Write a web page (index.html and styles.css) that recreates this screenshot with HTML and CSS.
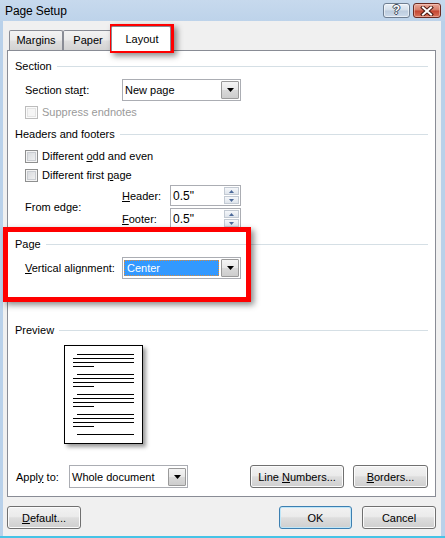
FILE: index.html
```html
<!DOCTYPE html>
<html>
<head>
<meta charset="utf-8">
<title>Page Setup</title>
<link rel="stylesheet" href="styles.css">
</head>
<body>
<div class="window">
  <div class="titlebar">
    <span class="title">Page Setup</span>
    <div class="caption-btns">
      <span class="cbtn help">?</span>
      <span class="cbtn close"><svg width="14" height="10" viewBox="0 0 14 10"><path d="M3 1.5 L11 8.5 M11 1.5 L3 8.5" stroke="#4a1a12" stroke-width="4" stroke-linecap="square" fill="none"/><path d="M3 1.5 L11 8.5 M11 1.5 L3 8.5" stroke="#ffffff" stroke-width="2" stroke-linecap="square" fill="none"/></svg></span>
    </div>
  </div>
  <div class="client">
    <div class="tabs">
      <div class="tab t-margins">Margins</div>
      <div class="tab t-paper">Paper</div>
      <div class="tab active">Layout</div>
    </div>
    <div class="panel">
      <div class="ghead">Section</div>
      <div class="frow r-section">
        <span class="lbl">Section sta<u>r</u>t:</span>
        <div class="combo"><span class="val">New page</span><span class="drop"><svg width="7" height="4" viewBox="0 0 7 4"><polygon points="0,0 7,0 3.5,4" fill="#000"/></svg></span></div>
      </div>
      <div class="chk disabled r-suppress"><span class="box"></span><span>Suppress endnotes</span></div>
      <div class="ghead g-hf">Headers and footers</div>
      <div class="chk r-odd"><span class="box"></span><span>Different <u>o</u>dd and even</span></div>
      <div class="chk r-first"><span class="box"></span><span>Different first <u>p</u>age</span></div>
      <div class="edge">
        <span class="edge-lbl">From edge:</span>
        <span class="elbl"><u>H</u>eader:</span>
        <div class="spin"><span class="sval">0.5"</span><span class="sbtns"><span class="sb"><svg width="5" height="3" viewBox="0 0 5 3"><polygon points="0,3 5,3 2.5,0" fill="#4d6a9a"/></svg></span><span class="sb"><svg width="5" height="3" viewBox="0 0 5 3"><polygon points="0,0 5,0 2.5,3" fill="#4d6a9a"/></svg></span></span></div>
        <span class="elbl"><u>F</u>ooter:</span>
        <div class="spin"><span class="sval">0.5"</span><span class="sbtns"><span class="sb"><svg width="5" height="3" viewBox="0 0 5 3"><polygon points="0,3 5,3 2.5,0" fill="#4d6a9a"/></svg></span><span class="sb"><svg width="5" height="3" viewBox="0 0 5 3"><polygon points="0,0 5,0 2.5,3" fill="#4d6a9a"/></svg></span></span></div>
      </div>
      <div class="ghead g-page">Page</div>
      <div class="frow r-valign">
        <span class="lbl"><u>V</u>ertical alignment:</span>
        <div class="combo focus"><span class="val">Center</span><span class="drop"><svg width="7" height="4" viewBox="0 0 7 4"><polygon points="0,0 7,0 3.5,4" fill="#000"/></svg></span></div>
      </div>
      <div class="ghead g-preview">Preview</div>
      <div class="page">
        <div class="pgroup"><div class="pline ind"></div><div class="pline"></div><div class="pline"></div><div class="pline short"></div></div>
        <div class="pgroup"><div class="pline ind"></div><div class="pline"></div><div class="pline"></div><div class="pline short"></div></div>
        <div class="pgroup"><div class="pline ind"></div><div class="pline"></div><div class="pline"></div><div class="pline short"></div></div>
        <div class="pgroup"><div class="pline ind"></div><div class="pline"></div><div class="pline"></div><div class="pline short"></div></div>
        <div class="pgroup"><div class="pline ind"></div></div>
      </div>
      <div class="apply">
        <span class="alb">Appl<u>y</u> to:</span>
        <div class="combo c-apply"><span class="val">Whole document</span><span class="drop"><svg width="7" height="4" viewBox="0 0 7 4"><polygon points="0,0 7,0 3.5,4" fill="#000"/></svg></span></div>
        <span class="btn b-line"><span>Line <u>N</u>umbers...</span></span>
        <span class="btn b-borders"><span><u>B</u>orders...</span></span>
      </div>
    </div>
    <div class="footer">
      <span class="btn b-default"><span><u>D</u>efault...</span></span>
      <span class="btn b-ok default"><span>OK</span></span>
      <span class="btn b-cancel"><span>Cancel</span></span>
    </div>
  </div>
  <div class="mark mark-tab"></div>
  <div class="mark mark-page"></div>
</div>
</body>
</html>
```
FILE: styles.css
```css
* { box-sizing: border-box; }
html, body { margin: 0; padding: 0; }
body {
  width: 445px;
  height: 538px;
  overflow: hidden;
  font-family: "Liberation Sans", Arial, sans-serif;
  font-size: 11px;
  color: #000;
  background: #fff;
}
u { text-decoration: underline; text-underline-offset: 1px; }

.window {
  position: relative;
  width: 445px;
  height: 538px;
  background: #b9d1ea;
  display: flex;
  flex-direction: column;
  box-shadow: inset 0 -2px 0 #46c3e6;
}

.titlebar {
  height: 21px;
  flex: none;
  display: flex;
  align-items: flex-start;
  background: linear-gradient(#c7d9ed, #bdd3ea);
}
.title {
  font-size: 12px;
  line-height: 21px;
  padding-left: 5px;
  padding-top: 1px;
  letter-spacing: -0.1px;
}
.caption-btns {
  margin-left: auto;
  display: flex;
  gap: 3px;
  padding-top: 3px;
  padding-right: 4px;
}
.cbtn {
  height: 15px;
  border-radius: 3px;
  display: flex;
  align-items: center;
  justify-content: center;
}
.help {
  width: 27px;
  border: 1px solid #6f7e91;
  background: linear-gradient(#e9f0f8, #d3deea 48%, #bccbdd 52%, #cddbeb);
  box-shadow: inset 0 0 0 1px rgba(255,255,255,0.55);
  color: #fff;
  font-weight: bold;
  font-size: 12px;
  line-height: 13px;
  text-shadow: 1px 0 0 #3a4656, -1px 0 0 #3a4656, 0 1px 0 #3a4656, 0 -1px 0 #3a4656;
}
.close {
  width: 28px;
  border: 1px solid #6a2a21;
  background: linear-gradient(#eaa999, #d57a67 48%, #c4432f 52%, #d9735a);
  box-shadow: inset 0 0 0 1px rgba(255,220,210,0.45);
}

.client {
  flex: 1;
  margin: 0 4px 2px 3px;
  background: #f0f0f0;
  padding: 5px 5px 0 4px;
  display: flex;
  flex-direction: column;
}

.tabs {
  display: flex;
  align-items: flex-end;
  height: 25px;
  margin-bottom: -1px;
  padding-left: 2px;
}
.tab {
  height: 20px;
  margin-bottom: 1px;
  border: 1px solid #898c95;
  border-bottom: none;
  border-radius: 2px 2px 0 0;
  background: linear-gradient(#f3f3f3, #ebebeb 45%, #dedede 55%, #d2d2d2);
  line-height: 19px;
  text-align: center;
}
.t-margins { width: 54px; }
.t-paper { width: 50px; }
.tab.active {
  position: relative;
  z-index: 1;
  height: 25px;
  margin-bottom: 0;
  margin-left: -2px;
  width: 60px;
  background: #fff;
  line-height: 24px;
  padding-left: 2px;
}

.panel {
  height: 447px;
  border: 1px solid #898c95;
  background: #fff;
  padding: 8px 7px 8px 7px;
  display: flex;
  flex-direction: column;
}

.ghead {
  display: flex;
  align-items: center;
  height: 14px;
  line-height: 14px;
}
.ghead::after {
  content: "";
  flex: 1;
  height: 1px;
  background: #d5dfe5;
  margin-left: 5px;
}
.g-hf { margin-top: 8px; }
.g-page { margin-top: 8px; }
.g-preview { margin-top: 44px; }

.frow {
  display: flex;
  align-items: center;
  height: 22px;
  padding-left: 10px;
}
.r-section { margin-top: 6px; }
.r-valign { margin-top: 6px; }
.lbl { width: 97px; }

.combo {
  width: 119px;
  height: 22px;
  border: 1px solid #abadb3;
  background: #fff;
  display: flex;
  align-items: center;
  padding-left: 2px;
}
.combo .val { flex: 1; white-space: nowrap; }
.drop {
  width: 18px;
  height: 18px;
  margin: 0 1px 0 2px;
  border: 1px solid #9a9a9a;
  border-radius: 1px;
  background: linear-gradient(#f4f4f4, #e8e8e8 48%, #d9d9d9 52%, #cdcdcd);
  display: flex;
  align-items: center;
  justify-content: center;
}
.combo.focus { padding-left: 1px; }
.combo.focus .val {
  height: 16px;
  line-height: 14px;
  background: #3399ff;
  color: #fff;
  border: 1px dotted #d98a3d;
  padding-left: 2px;
}

.chk {
  display: flex;
  align-items: center;
  gap: 4px;
  height: 14px;
  padding-left: 10px;
}
.box {
  width: 13px;
  height: 13px;
  border: 1px solid #8e8f8f;
  background: linear-gradient(135deg, #d3d6da, #f5f5f5);
  box-shadow: inset 0 0 0 1px #f4f4f4, inset 0 0 0 2px #c9ccd1;
}
.chk.disabled { color: #9a9a9a; }
.chk.disabled .box {
  border-color: #bcbcbc;
  background: #f5f5f5;
  box-shadow: inset 0 0 0 1px #fbfbfb, inset 0 0 0 2px #e4e4e4;
}
.r-suppress { margin-top: 4px; }
.r-odd { margin-top: 8px; }
.r-first { margin-top: 5px; }

.edge {
  margin-top: 3px;
  display: grid;
  grid-template-columns: 97px 48px 71px;
  grid-template-rows: 21px 21px;
  row-gap: 2px;
  align-items: center;
  padding-left: 10px;
}
.edge-lbl { grid-row: 1 / span 2; grid-column: 1; }
.spin {
  height: 21px;
  border: 1px solid #abadb3;
  display: flex;
  align-items: center;
  padding-left: 2px;
  font-size: 12px;
}
.sval { flex: 1; }
.sbtns {
  display: flex;
  flex-direction: column;
  gap: 1px;
  margin-right: 1px;
}
.sb {
  width: 15px;
  height: 8px;
  border: 1px solid #c3cad3;
  background: linear-gradient(#f5f7fa, #dfe5ec);
  display: flex;
  align-items: center;
  justify-content: center;
}

.page {
  margin-top: 8px;
  margin-left: 49px;
  width: 79px;
  height: 99px;
  border: 1px solid #000;
  background: #fff;
  box-shadow: 3px 3px 4px rgba(0,0,0,0.4);
  padding: 8px 8px 0 8px;
  display: flex;
  flex-direction: column;
  gap: 7px;
}
.pgroup {
  display: flex;
  flex-direction: column;
  gap: 3px;
}
.pline { height: 1px; background: #000; }
.pline.ind { margin-left: 4px; }
.pline.short { width: 21px; }

.apply {
  margin-top: auto;
  display: flex;
  align-items: center;
  height: 23px;
}
.alb { width: 54px; padding-left: 1px; }
.c-apply { height: 23px; }
.b-line { margin-left: auto; width: 94px; }
.b-borders { margin-left: 9px; width: 75px; }

.btn {
  height: 23px;
  border: 1px solid #707070;
  border-radius: 3px;
  background: linear-gradient(#f2f2f2, #ebebeb 45%, #dddddd 52%, #cfcfcf);
  box-shadow: inset 0 0 0 1px #fbfbfb;
  display: flex;
  align-items: center;
  justify-content: center;
  white-space: nowrap;
}
.btn.default {
  border-color: #3c7fb1;
  box-shadow: inset 0 0 0 1px #bfe6f8;
}

.footer {
  margin-top: 9px;
  display: flex;
}
.b-default { width: 74px; }
.b-ok { margin-left: auto; width: 73px; }
.b-cancel { margin-left: 10px; width: 74px; }

.mark {
  position: absolute;
  border: 5px solid #ff0000;
  box-shadow: 3px 3px 6px rgba(0,0,0,0.45);
  pointer-events: none;
}
.mark-tab { left: 110px; top: 24px; width: 64px; height: 29px; }
.mark-page { left: 3px; top: 227px; width: 248px; height: 75px; }
```
